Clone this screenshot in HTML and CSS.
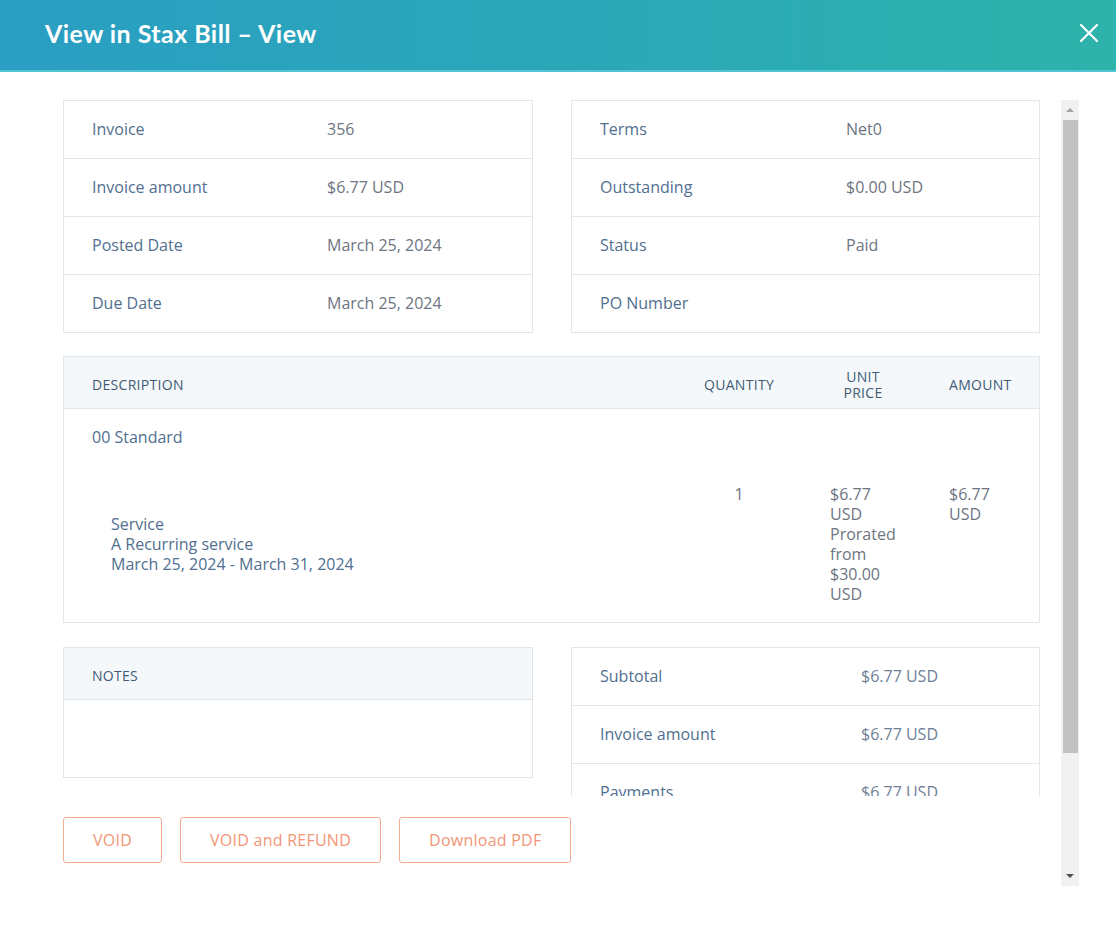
FILE: index.html
```html
<!DOCTYPE html>
<html lang="en">
<head>
  <meta charset="UTF-8" />
  <title>View in Stax Bill</title>
  <link rel="stylesheet" href="styles.css">
</head>
<body>
  <div class="modal-header">
    <h1>View in Stax Bill – View</h1>
    <button class="close" title="Close">
      <svg width="20" height="20" viewBox="0 0 20 20">
        <path d="M2 2 L18 18 M18 2 L2 18" stroke="#fff" stroke-width="2.2" stroke-linecap="round" fill="none"/>
      </svg>
    </button>
  </div>

  <div class="modal-body">
    <div class="content">
      <div class="summary">
        <div class="card info-card">
          <div class="info-row"><span class="label">Invoice</span><span class="value">356</span></div>
          <div class="info-row"><span class="label">Invoice amount</span><span class="value">$6.77 USD</span></div>
          <div class="info-row"><span class="label">Posted Date</span><span class="value">March 25, 2024</span></div>
          <div class="info-row"><span class="label">Due Date</span><span class="value">March 25, 2024</span></div>
        </div>
        <div class="card info-card wide">
          <div class="info-row"><span class="label">Terms</span><span class="value">Net0</span></div>
          <div class="info-row"><span class="label">Outstanding</span><span class="value">$0.00 USD</span></div>
          <div class="info-row"><span class="label">Status</span><span class="value">Paid</span></div>
          <div class="info-row"><span class="label">PO Number</span><span class="value"></span></div>
        </div>
      </div>

      <div class="card lines">
        <div class="line-head">
          <span class="col-desc">DESCRIPTION</span>
          <span class="col-qty">QUANTITY</span>
          <span class="col-unit"><span class="unit-title">UNIT<br>PRICE</span></span>
          <span class="col-amount">AMOUNT</span>
        </div>
        <div class="line-row">
          <span class="col-desc">00 Standard</span>
        </div>
        <div class="line-row item">
          <div class="col-desc">
            <div class="item-desc">
              <div>Service</div>
              <div>A Recurring service</div>
              <div>March 25, 2024 - March 31, 2024</div>
            </div>
          </div>
          <span class="col-qty">1</span>
          <span class="col-unit">$6.77 USD Prorated from $30.00 USD</span>
          <span class="col-amount">$6.77 USD</span>
        </div>
      </div>

      <div class="summary bottom">
        <div class="card notes">
          <div class="notes-head">NOTES</div>
          <div class="notes-body"></div>
        </div>
        <div class="totals-clip">
          <div class="card info-card totals">
            <div class="info-row"><span class="label">Subtotal</span><span class="value">$6.77 USD</span></div>
            <div class="info-row"><span class="label">Invoice amount</span><span class="value">$6.77 USD</span></div>
            <div class="info-row"><span class="label">Payments</span><span class="value">$6.77 USD</span></div>
            <div class="info-row"><span class="label">Outstanding</span><span class="value">$0.00 USD</span></div>
          </div>
        </div>
      </div>

      <div class="actions">
        <button class="btn">VOID</button>
        <button class="btn">VOID and REFUND</button>
        <button class="btn">Download PDF</button>
      </div>
    </div>

    <div class="scrollbar">
      <div class="scroll-btn up"></div>
      <div class="thumb"></div>
      <div class="track"></div>
      <div class="scroll-btn down"></div>
    </div>
  </div>
</body>
</html>
```

FILE: styles.css
```css
body {
  margin: 0;
  padding: 0;
  background: #fff;
  font-family: 'Open Sans', 'Noto Sans', sans-serif;
  font-size: 16px;
  color: #516f90;
  width: 1116px;
  height: 936px;
  overflow: hidden;
}
.modal-header {
  height: 65px;
  display: flex;
  align-items: center;
  justify-content: space-between;
  padding: 0 17px 5px 45px;
  background: linear-gradient(90deg, #2a9ec3 0%, #2ba9b6 60%, #2db3aa 100%);
  border-bottom: 2px solid #52c4d4;
}
.modal-header h1 {
  margin: 0;
  color: #fff;
  font-family: 'Lato', sans-serif;
  font-weight: 700;
  font-size: 25px;
  letter-spacing: 0.45px;
}
.close {
  border: none;
  background: transparent;
  padding: 0;
  width: 20px;
  height: 20px;
  display: flex;
  cursor: pointer;
}
.modal-body {
  display: flex;
  gap: 21px;
  padding: 28px 0 0 63px;
}
.content {
  width: 977px;
  display: flex;
  flex-direction: column;
}
.summary {
  display: grid;
  grid-template-columns: 470px 469px;
  gap: 38px;
  align-items: start;
}
.card {
  border: 1px solid #e3e7ec;
  background: #fff;
}
.info-row {
  display: grid;
  grid-template-columns: 235px 1fr;
  align-items: center;
  height: 55px;
  padding: 0 0 2px 28px;
  border-bottom: 1px solid #e3e7ec;
}
.info-row:last-child {
  border-bottom: none;
}
.info-card.wide .info-row {
  grid-template-columns: 246px 1fr;
}
.info-card.totals .info-row {
  grid-template-columns: 261px 1fr;
}
.info-row .label {
  color: #516f90;
}
.info-row .value {
  color: #6e7582;
}
.info-card.totals .value {
  color: #6e7f96;
}
.lines {
  margin-top: 23px;
}
.line-head,
.line-row {
  display: grid;
  grid-template-columns: 1fr 141px 119px 90px;
}
.line-head {
  height: 47px;
  padding-top: 4px;
  align-items: center;
  background: #f5f8fa;
  border-bottom: 1px solid #e3e7ec;
  font-size: 14px;
  letter-spacing: 0.3px;
  color: #425b76;
}
.line-head .col-unit {
  padding-right: 53px;
  text-align: center;
  line-height: 16px;
}
.unit-title {
  display: block;
}
.col-desc {
  padding-left: 28px;
}
.col-qty {
  text-align: center;
  padding-right: 41px;
}
.col-unit {
  padding-right: 53px;
}
.col-amount {
  padding-right: 28px;
}
.line-row {
  padding: 18px 0;
  line-height: 20px;
  color: #516f90;
}
.line-row.item {
  padding-top: 19px;
}
.line-row.item .col-qty,
.line-row.item .col-unit,
.line-row.item .col-amount {
  color: #6e7582;
}
.line-row.item .col-desc {
  display: flex;
  align-items: center;
}
.item-desc {
  padding-left: 19px;
}
.bottom {
  margin-top: 24px;
}
.notes-head {
  height: 47px;
  padding: 4px 0 0 28px;
  display: flex;
  align-items: center;
  background: #f5f8fa;
  border-bottom: 1px solid #e3e7ec;
  font-size: 14px;
  letter-spacing: 0.3px;
  color: #425b76;
}
.notes-body {
  height: 77px;
}
.totals-clip {
  height: 149px;
  overflow: hidden;
}
.actions {
  display: flex;
  gap: 18px;
  margin-top: 21px;
}
.btn {
  height: 46px;
  padding: 0 29px;
  border: 1px solid #f4ab92;
  border-radius: 3px;
  background: #fff;
  color: #f29677;
  font-family: 'Open Sans', 'Noto Sans', sans-serif;
  font-size: 16px;
  letter-spacing: 0.25px;
  cursor: pointer;
}
.scrollbar {
  width: 18px;
  height: 786px;
  background: #f1f1f1;
  display: flex;
  flex-direction: column;
  align-items: center;
}
.scroll-btn {
  height: 20px;
  width: 18px;
  display: flex;
  justify-content: center;
  align-items: center;
  flex: none;
}
.scroll-btn.up:before {
  content: "";
  border-left: 4px solid transparent;
  border-right: 4px solid transparent;
  border-bottom: 4px solid #a3a3a3;
}
.scroll-btn.down:before {
  content: "";
  border-left: 4px solid transparent;
  border-right: 4px solid transparent;
  border-top: 4px solid #505050;
}
.thumb {
  width: 15px;
  height: 633px;
  background: #c1c1c1;
  flex: none;
}
.track {
  flex: 1;
}
```
